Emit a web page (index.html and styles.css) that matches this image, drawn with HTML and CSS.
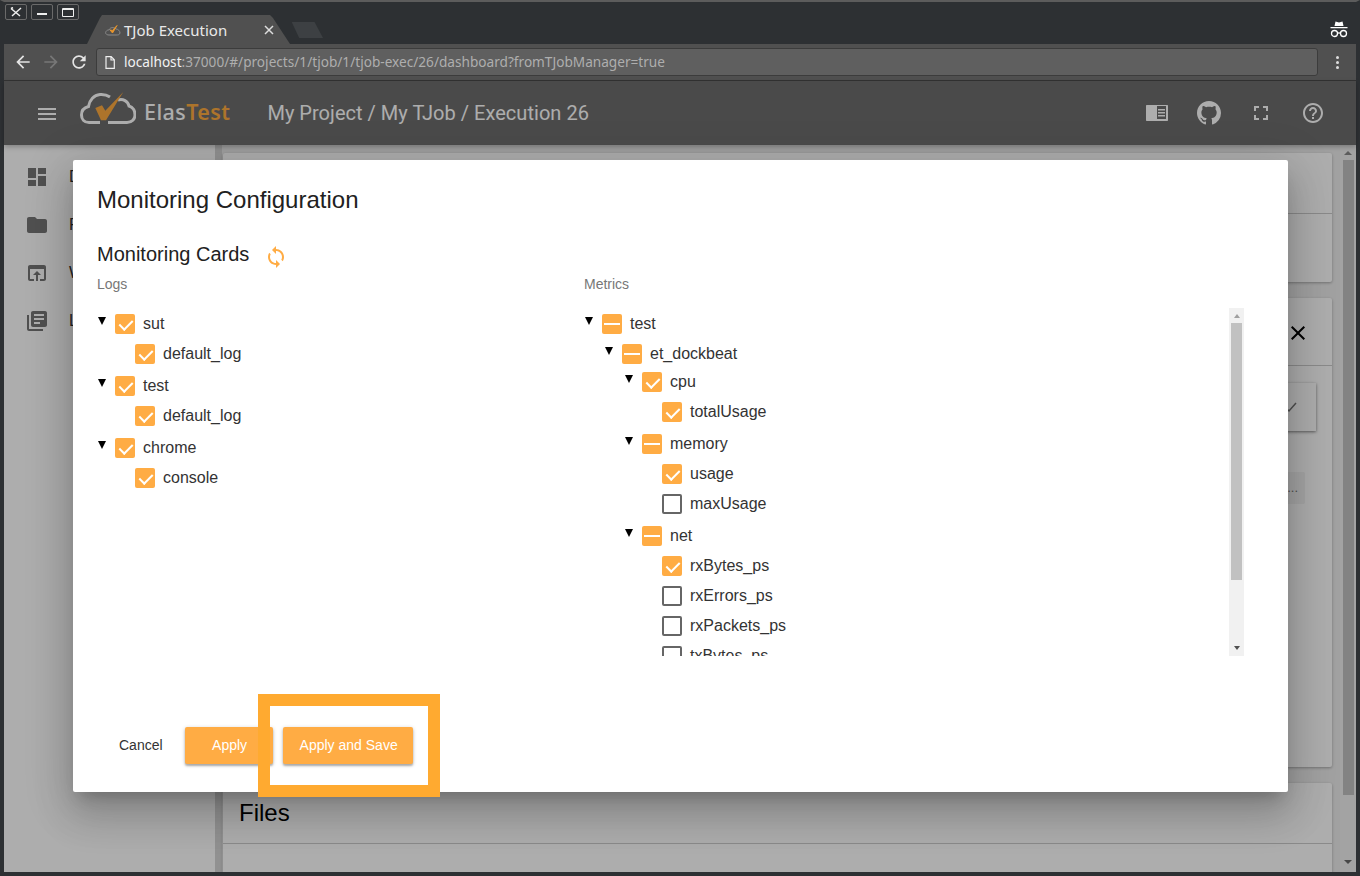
FILE: index.html
```html
<!DOCTYPE html>
<html>
<head>
	<meta charset="utf-8">
	<title>TJob Execution</title>
	<link rel="stylesheet" href="styles.css">
</head>
<body>

<div class="window">
	<div class="titlebar">
		<div class="wm-btn"><svg width="12" height="10" viewBox="0 0 12 10"><path d="M1 1.500l9 7.500M11 1L2 9M1 1.500l2-1" stroke="#eee" stroke-width="1.500" fill="none"/></svg></div>
		<div class="wm-btn"><span class="wm-min"></span></div>
		<div class="wm-btn"><span class="wm-max"></span></div>
		<div class="tab">
			<svg class="tab-icon" width="16" height="12" viewBox="0 0 16 12"><path d="M4 11C1 11 0 9 1 7.500 2 6 3 6 4 6 5 3 9 3 11 5 13 5 15 7 15 9 14.500 11 13 11 11 11Z" fill="none" stroke="#8a8a8a" stroke-width="1"/><path d="M5 6l2.500 3L12 1.500 7.500 6.500Z" fill="#e8952c" stroke="#e8952c" stroke-width="1"/></svg>
			<span class="tab-title">TJob Execution</span>
			<svg class="tab-close" width="10" height="10" viewBox="0 0 10 10"><path d="M1 1l8 8M9 1L1 9" stroke="#ddd" stroke-width="1.500"/></svg>
		</div>
		<div class="new-tab"></div>
		<svg class="incognito" width="18" height="18" viewBox="0 0 18 18"><path d="M4.500 6L5.500 1.500 9 2.500 12.500 1.500 13.500 6Z M0.500 7h17v1.200h-17Z" fill="#fff"/><circle cx="4.500" cy="13.500" r="3" fill="none" stroke="#fff" stroke-width="1.300"/><circle cx="13.500" cy="13.500" r="3" fill="none" stroke="#fff" stroke-width="1.300"/><path d="M7.500 13h3" stroke="#fff" stroke-width="1.300"/></svg>
	</div>

	<div class="toolbar">
		<svg class="nav-icon" width="20" height="20" viewBox="0 0 24 24"><path fill="#e4e4e4" d="M20 11H7.830l5.590-5.590L12 4l-8 8 8 8 1.410-1.410L7.830 13H20v-2z"/></svg>
		<svg class="nav-icon" width="20" height="20" viewBox="0 0 24 24"><path fill="#777" d="M4 11h12.170l-5.590-5.590L12 4l8 8-8 8-1.410-1.410L16.170 13H4v-2z"/></svg>
		<svg class="nav-icon" width="20" height="20" viewBox="0 0 24 24"><path fill="#e4e4e4" d="M17.650 6.350C16.200 4.900 14.210 4 12 4c-4.420 0-7.990 3.580-7.990 8s3.570 8 7.990 8c3.730 0 6.840-2.550 7.730-6h-2.080c-.82 2.330-3.040 4-5.650 4-3.310 0-6-2.690-6-6s2.690-6 6-6c1.660 0 3.140.69 4.220 1.780L13 11h7V4l-2.350 2.350z"/></svg>
		<div class="urlbar">
			<svg width="10" height="13" viewBox="0 0 10 13"><path d="M1 .7h5.200L9.300 3.800v8.500H1Z M6 .7v3.300h3.300" fill="none" stroke="#eee" stroke-width="1.200"/></svg>
			<span class="url"><b>localhost</b>:37000/#/projects/1/tjob/1/tjob-exec/26/dashboard?fromTJobManager=true</span>
		</div>
		<div class="dots"><i></i><i></i><i></i></div>
	</div>

	<div class="app">
		<header class="header">
			<div class="burger"><i></i><i></i><i></i></div>
			<svg class="logo" width="56" height="34" viewBox="0 0 56 34">
				<path d="M20 30.500H9C4 30.500 1.500 27 1.500 23 1.500 18.500 4.500 15.500 8.500 14.500 9.500 8 14 3 20 2.500 24 2.200 27 3 30 5M38 8C43 6.500 48 9 49 14 53 15 55 19 55 23 55 27 52 30.500 47 30.500H28" fill="none" stroke="#fff" stroke-width="3"/>
				<path d="M15.300 16L22 13.300 25.300 18.700 43.300 0 26 28.300H21Z" fill="#ffab40"/>
			</svg>
			<span class="brand">Elas<span class="brand-test">Test</span></span>
			<span class="crumbs">My Project / My TJob / Execution 26</span>
			<div class="header-icons">
				<svg width="26" height="26" viewBox="0 0 26 26"><path fill="#fff" d="M3 5h20c.600 0 1 .400 1 1v14c0 .600-.400 1-1 1H3c-.600 0-1-.400-1-1V6c0-.600.400-1 1-1z"/><path fill="#6d6d6d" d="M13 6h9v13h-9z"/><path fill="#fff" d="M14 9h7v1.500h-7zM14 12h7v1.500h-7zM14 15h7v1.500h-7z"/></svg>
				<svg width="24" height="24" viewBox="0 0 16 16"><path fill="#fff" d="M8 0C3.580 0 0 3.580 0 8c0 3.540 2.290 6.530 5.470 7.590.4.070.55-.17.55-.38 0-.19-.01-.82-.01-1.490-2.010.37-2.530-.49-2.690-.94-.09-.23-.48-.94-.82-1.130-.28-.15-.68-.52-.01-.53.63-.01 1.080.58 1.230.82.720 1.210 1.870.87 2.330.66.070-.52.28-.87.51-1.070-1.780-.2-3.640-.89-3.640-3.950 0-.87.31-1.590.82-2.150-.08-.2-.36-1.020.08-2.120 0 0 .67-.21 2.200.82.640-.18 1.320-.27 2-.27.680 0 1.360.09 2 .27 1.530-1.040 2.200-.82 2.200-.82.440 1.100.16 1.920.08 2.120.51.560.82 1.270.82 2.150 0 3.070-1.870 3.750-3.650 3.950.29.25.54.730.54 1.480 0 1.070-.01 1.930-.01 2.200 0 .21.15.46.55.38A8.013 8.013 0 0 0 16 8c0-4.420-3.580-8-8-8z"/></svg>
				<svg width="24" height="24" viewBox="0 0 24 24"><path fill="#fff" d="M7 14H5v5h5v-2H7v-3zm-2-4h2V7h3V5H5v5zm12 7h-3v2h5v-5h-2v3zM14 5v2h3v3h2V5h-5z"/></svg>
				<svg width="24" height="24" viewBox="0 0 24 24"><path fill="#fff" d="M11 18h2v-2h-2v2zm1-16C6.480 2 2 6.480 2 12s4.480 10 10 10 10-4.480 10-10S17.520 2 12 2zm0 18c-4.410 0-8-3.590-8-8s3.590-8 8-8 8 3.590 8 8-3.590 8-8 8zm0-14c-2.210 0-4 1.790-4 4h2c0-1.100.9-2 2-2s2 .9 2 2c0 2-3 1.750-3 5h2c0-2.250 3-2.500 3-5 0-2.210-1.790-4-4-4z"/></svg>
			</div>
		</header>

		<div class="main">
			<nav class="sidebar">
				<div class="side-item"><svg width="24" height="24" viewBox="0 0 24 24"><path d="M3 13h8V3H3v10zm0 8h8v-6H3v6zm10 0h8V11h-8v10zm0-18v6h8V3h-8z"/></svg><span>Dashboard</span></div>
				<div class="side-item"><svg width="24" height="24" viewBox="0 0 24 24"><path d="M10 4H4c-1.100 0-1.990.9-1.990 2L2 18c0 1.100.9 2 2 2h16c1.100 0 2-.9 2-2V8c0-1.100-.9-2-2-2h-8l-2-2z"/></svg><span>Projects</span></div>
				<div class="side-item"><svg width="24" height="24" viewBox="0 0 24 24"><path d="M19 4H5c-1.110 0-2 .9-2 2v12c0 1.100.89 2 2 2h4v-2H5V8h14v10h-4v2h4c1.100 0 2-.9 2-2V6c0-1.100-.89-2-2-2zm-7 6l-4 4h3v6h2v-6h3l-4-4z"/></svg><span>Web</span></div>
				<div class="side-item"><svg width="24" height="24" viewBox="0 0 24 24"><path d="M4 6H2v14c0 1.100.9 2 2 2h14v-2H4V6zm16-4H8c-1.100 0-2 .9-2 2v12c0 1.100.9 2 2 2h12c1.100 0 2-.9 2-2V4c0-1.100-.9-2-2-2zm-1 9H9V9h10v2zm-4 4H9v-2h6v2zm4-8H9V5h10v2z"/></svg><span>Logs</span></div>
			</nav>
			<div class="content">
				<section class="card card-a"><div class="card-head"></div></section>
				<section class="card card-b">
					<div class="card-head card-head-b">
						<svg width="24" height="24" viewBox="0 0 24 24"><path d="M19 6.410L17.590 5 12 10.590 6.410 5 5 6.410 10.590 12 5 17.590 6.410 19 12 13.410 17.590 19 19 17.590 13.410 12z"/></svg>
					</div>
					<div class="card-body">
						<div class="back-btn"><svg width="12" height="12" viewBox="0 0 12 12"><path d="M1 8l2 2 7-8" fill="none" stroke="#777" stroke-width="1.500"/></svg></div>
						<div class="back-chip">...</div>
					</div>
				</section>
				<section class="card card-c"><div class="card-head"><h3>Files</h3></div></section>
			</div>
			<div class="page-scroll">
				<span class="arrow-up"></span>
				<div class="page-thumb"></div>
				<span class="arrow-down"></span>
			</div>
		</div>

		<div class="overlay"></div>

		<div class="dialog">
			<h1>Monitoring Configuration</h1>
			<div class="cards-title">
				<h2>Monitoring Cards</h2>
				<svg width="24" height="24" viewBox="0 0 24 24"><path fill="#ffac44" d="M12 4V1L8 5l4 4V6c3.310 0 6 2.690 6 6 0 1.010-.25 1.970-.7 2.800l1.460 1.460C19.540 15.030 20 13.570 20 12c0-4.420-3.580-8-8-8zm0 14c-3.310 0-6-2.690-6-6 0-1.010.25-1.970.7-2.800L5.240 7.740C4.460 8.970 4 10.430 4 12c0 4.420 3.580 8 8 8v3l4-4-4-4v3z"/></svg>
			</div>
			<div class="columns">
				<div class="col">
					<div class="col-label">Logs</div>
					<ul class="tree">
						<li class="group">
							<div class="node"><i class="toggle"></i><i class="cb on"></i>sut</div>
							<ul><li><div class="node leaf"><i class="cb on"></i>default_log</div></li></ul>
						</li>
						<li class="group">
							<div class="node"><i class="toggle"></i><i class="cb on"></i>test</div>
							<ul><li><div class="node leaf"><i class="cb on"></i>default_log</div></li></ul>
						</li>
						<li class="group">
							<div class="node"><i class="toggle"></i><i class="cb on"></i>chrome</div>
							<ul><li><div class="node leaf"><i class="cb on"></i>console</div></li></ul>
						</li>
					</ul>
				</div>
				<div class="col">
					<div class="col-label">Metrics</div>
					<div class="tree-scroll">
						<ul class="tree">
							<li>
								<div class="node"><i class="toggle"></i><i class="cb part"></i>test</div>
								<ul><li>
									<div class="node"><i class="toggle"></i><i class="cb part"></i>et_dockbeat</div>
									<ul class="tight">
										<li class="group">
											<div class="node"><i class="toggle"></i><i class="cb on"></i>cpu</div>
											<ul><li><div class="node leaf"><i class="cb on"></i>totalUsage</div></li></ul>
										</li>
										<li class="group">
											<div class="node"><i class="toggle"></i><i class="cb part"></i>memory</div>
											<ul>
												<li><div class="node leaf"><i class="cb on"></i>usage</div></li>
												<li><div class="node leaf"><i class="cb"></i>maxUsage</div></li>
											</ul>
										</li>
										<li class="group">
											<div class="node"><i class="toggle"></i><i class="cb part"></i>net</div>
											<ul>
												<li><div class="node leaf"><i class="cb on"></i>rxBytes_ps</div></li>
												<li><div class="node leaf"><i class="cb"></i>rxErrors_ps</div></li>
												<li><div class="node leaf"><i class="cb"></i>rxPackets_ps</div></li>
												<li><div class="node leaf"><i class="cb"></i>txBytes_ps</div></li>
											</ul>
										</li>
									</ul>
								</li></ul>
							</li>
						</ul>
						<div class="tree-bar">
							<span class="bar-up"></span>
							<div class="bar-thumb"></div>
							<span class="bar-down"></span>
						</div>
					</div>
				</div>
			</div>
			<div class="actions">
				<button class="btn btn-flat">Cancel</button>
				<button class="btn btn-raised btn-apply">Apply</button>
				<button class="btn btn-raised">Apply and Save</button>
			</div>
		</div>

		<div class="highlight"></div>
	</div>
</div>

</body>
</html>
```

FILE: styles.css
```css
* {
	margin: 0;
	padding: 0;
	box-sizing: border-box;
}
html, body {
	width: 1360px;
	height: 876px;
	overflow: hidden;
}
body {
	font-family: "Liberation Sans", Arial, sans-serif;
	background: #2d3033;
}
ul {
	list-style: none;
}

.window {
	width: 1360px;
	height: 876px;
	display: flex;
	flex-direction: column;
	border: 4px solid #2d3033;
	border-top: 2px solid #5c5c5c;
}

/* browser chrome */
.titlebar {
	height: 42px;
	flex: none;
	display: flex;
	padding-left: 1px;
	background: #2d3033;
}
.wm-btn {
	width: 22px;
	height: 16px;
	margin: 2px 4px 0 0;
	display: flex;
	align-items: center;
	justify-content: center;
	border: 1px solid #6a6a6a;
	border-radius: 2px;
}
.wm-min {
	width: 10px;
	height: 2px;
	margin-top: 3px;
	background: #eee;
}
.wm-max {
	width: 12px;
	height: 9px;
	border: 1px solid #eee;
	border-top-width: 2px;
	border-radius: 1px;
}
.tab {
	width: 203px;
	height: 29px;
	margin: 13px 0 0 4px;
	padding: 0 16px 0 18px;
	display: flex;
	align-items: center;
	background: #505050;
	clip-path: polygon(0 100%, 13px 3px, 15px 0, 183px 0, 186px 3px, 100% 100%);
	color: #e9e9e9;
	font: 15px "Noto Sans", sans-serif;
}
.tab-title {
	margin-left: 3px;
	flex: 1;
}
.new-tab {
	width: 34px;
	height: 16px;
	margin: 20px 0 0 -1px;
	background: #3d4043;
	clip-path: polygon(8% 0, 75% 0, 100% 100%, 30% 100%);
}
.incognito {
	margin: 18px 8px 0 auto;
}

.toolbar {
	height: 37px;
	flex: none;
	display: flex;
	align-items: center;
	padding: 0 12px 0 9px;
	background: #505050;
	border-bottom: 1px solid #333;
}
.nav-icon {
	margin-right: 8px;
}
.urlbar {
	width: 1222px;
	height: 28px;
	margin-left: -1px;
	padding-left: 8px;
	display: flex;
	align-items: center;
	gap: 9px;
	background: #5f5f5f;
	border: 1px solid #3c3c3c;
	border-radius: 3px;
}
.url {
	margin-top: -1px;
	color: #aeaeae;
	font: 13.630px "Noto Sans", sans-serif;
	white-space: nowrap;
}
.url b {
	color: #f2f2f2;
	font-weight: normal;
}
.dots {
	margin-left: 18px;
	display: flex;
	flex-direction: column;
	gap: 2px;
}
.dots i {
	width: 3px;
	height: 3px;
	border-radius: 50%;
	background: #ddd;
}

/* app behind the dialog */
.app {
	flex: 1;
	min-height: 0;
	position: relative;
	display: flex;
	flex-direction: column;
}
.header {
	height: 64px;
	flex: none;
	display: flex;
	align-items: center;
	padding-left: 34px;
	background: #6d6d6d;
	color: #fff;
	box-shadow: 0 2px 5px rgba(0, 0, 0, .25);
	z-index: 1;
}
.burger {
	width: 18px;
	display: flex;
	flex-direction: column;
	gap: 3px;
	margin-top: 1px;
}
.burger i {
	height: 2px;
	background: #fff;
}
.logo {
	margin: 0 0 8px 24px;
}
.brand {
	margin: -4px 0 0 8px;
	color: #fff;
	font: 500 21.500px "Noto Sans", sans-serif;
	letter-spacing: .4px;
}
.brand-test {
	color: #ffab40;
	font-weight: 600;
}
.crumbs {
	margin-left: 37px;
	font: 20px Roboto, sans-serif;
	letter-spacing: .03px;
}
.header-icons {
	margin-left: auto;
	margin-right: 30px;
	display: grid;
	grid-template-columns: repeat(4, 26px);
	gap: 26px;
	justify-items: center;
	align-items: center;
}

.main {
	flex: 1;
	min-height: 0;
	display: flex;
	background: #eee;
	overflow: hidden;
}
.sidebar {
	width: 218px;
	flex: none;
	padding-top: 8px;
	background: #fff;
	border-right: 7px solid #d6d6d6;
}
.side-item {
	height: 48px;
	display: flex;
	align-items: center;
	padding-left: 21px;
	gap: 20px;
	font-size: 16px;
	color: #333;
}
.side-item svg {
	fill: #777;
}
.content {
	flex: 1;
	padding: 8px 8px 0 0;
	display: flex;
	flex-direction: column;
	gap: 16px;
	min-width: 0;
}
.card {
	flex: none;
	margin-left: 1px;
	background: #fff;
	border-radius: 2px;
	box-shadow: 0 1px 3px rgba(0, 0, 0, .3);
}
.card-a {
	height: 129px;
}
.card-b {
	height: 469px;
}
.card-c {
	height: 120px;
}
.card-head {
	height: 61px;
	display: flex;
	align-items: center;
	padding-left: 16px;
	border-bottom: 1px solid #ccc;
}
.card-head h3 {
	font-size: 24px;
	font-weight: normal;
	color: #000;
}
.card-head-b {
	height: 68px;
	justify-content: flex-end;
	padding: 3px 22px 0 0;
}
.card-body {
	display: flex;
	flex-direction: column;
	align-items: flex-end;
	padding: 17px 16px 0 0;
}
.back-btn {
	width: 100px;
	height: 48px;
	display: flex;
	align-items: center;
	justify-content: flex-end;
	padding-right: 18px;
	box-shadow: 0 1px 3px rgba(0, 0, 0, .5);
}
.back-chip {
	width: 60px;
	height: 32px;
	margin: 41px 11px 0 0;
	padding-right: 7px;
	text-align: right;
	color: #777;
	font-size: 13px;
	line-height: 32px;
	background: #f3f3f3;
	border-radius: 2px;
}
.page-scroll {
	width: 16px;
	flex: none;
	display: flex;
	flex-direction: column;
	align-items: center;
	background: #f1f1f1;
}
.page-thumb {
	width: 11px;
	height: 635px;
	margin-top: 5px;
	background: #c1c1c1;
}
.arrow-up, .arrow-down {
	width: 0;
	height: 0;
	border-left: 4px solid transparent;
	border-right: 4px solid transparent;
}
.arrow-up {
	margin-top: 6px;
	border-bottom: 4px solid #8a8a8a;
}
.arrow-down {
	margin-top: 65px;
	border-top: 4px solid #6a6a6a;
}

/* dialog */
.overlay {
	position: absolute;
	inset: 0;
	z-index: 2;
	background: rgba(0, 0, 0, .32);
}
.dialog {
	position: absolute;
	left: 69px;
	top: 79px;
	z-index: 3;
	width: 1215px;
	height: 632px;
	padding: 24px 24px 0;
	background: #fff;
	border-radius: 2px;
	color: #212121;
	box-shadow: 0 11px 15px -7px rgba(0, 0, 0, .2), 0 24px 38px 3px rgba(0, 0, 0, .14), 0 9px 46px 8px rgba(0, 0, 0, .12);
}
.dialog h1 {
	font-size: 24px;
	line-height: 32px;
	font-weight: normal;
}
.cards-title {
	height: 28px;
	margin-top: 24px;
	display: flex;
	align-items: center;
	gap: 15px;
}
.cards-title h2 {
	font-size: 20px;
	font-weight: normal;
}
.cards-title svg {
	margin-top: 6px;
}
.columns {
	display: grid;
	grid-template-columns: 487px 660px;
	margin-top: 6px;
}
.col-label {
	height: 20px;
	line-height: 20px;
	font-size: 14px;
	color: #777;
	margin-bottom: 14px;
}
.tree {
	padding-top: 1px;
}
.tree-scroll {
	height: 348px;
	display: flex;
	overflow: hidden;
}
.tree-scroll .tree {
	flex: 1;
}
.tree li ul {
	padding-left: 20px;
}
.tree .tight {
	margin-top: -2px;
}
.group + .group {
	margin-top: 2px;
}
.node {
	height: 30px;
	display: flex;
	align-items: center;
	font-size: 16px;
	white-space: nowrap;
	color: #333;
}
.leaf {
	padding-left: 18px;
}
.toggle {
	width: 0;
	height: 0;
	margin: 0 9px 7px 1px;
	border-left: 4.500px solid transparent;
	border-right: 4.500px solid transparent;
	border-top: 8px solid #000;
}
.cb {
	width: 20px;
	height: 20px;
	margin-right: 8px;
	flex: none;
	position: relative;
	border: 2px solid #666;
	border-radius: 2px;
}
.cb.on, .cb.part {
	background: #ffac44;
	border: 0;
}
.cb.on::after {
	content: "";
	position: absolute;
	left: 7px;
	top: 3px;
	width: 6px;
	height: 11px;
	border-right: 2px solid #fff;
	border-bottom: 2px solid #fff;
	transform: rotate(45deg);
}
.cb.part::after {
	content: "";
	position: absolute;
	left: 2px;
	top: 9px;
	width: 16px;
	height: 2px;
	background: #fff;
}
.tree-bar {
	width: 15px;
	flex: none;
	display: flex;
	flex-direction: column;
	align-items: center;
	background: #f1f1f1;
}
.bar-thumb {
	width: 11px;
	height: 257px;
	margin-top: 5px;
	background: #c1c1c1;
}
.bar-up, .bar-down {
	width: 0;
	height: 0;
	border-left: 3.500px solid transparent;
	border-right: 3.500px solid transparent;
}
.bar-up {
	margin-top: 6px;
	border-bottom: 4px solid #a0a0a0;
}
.bar-down {
	margin-top: 66px;
	border-top: 4px solid #505050;
}
.actions {
	margin: 71px 0 0 5px;
	display: flex;
	align-items: center;
}
.btn {
	height: 37px;
	padding: 0 15px 2px 17px;
	border: 0;
	border-radius: 2px;
	background: none;
	font: 14px "Liberation Sans", Arial, sans-serif;
}
.btn-flat {
	color: #333;
	margin-right: 7px;
}
.btn-raised {
	color: #fff;
	background: #ffac44;
	box-shadow: 0 2px 2px rgba(0, 0, 0, .24), 0 1px 4px rgba(0, 0, 0, .2);
}
.btn-apply {
	width: 88px;
	margin-right: 10px;
}
.highlight {
	position: absolute;
	left: 254px;
	top: 613px;
	z-index: 4;
	width: 182px;
	height: 103px;
	border: 12px solid #ffaa30;
}
```
